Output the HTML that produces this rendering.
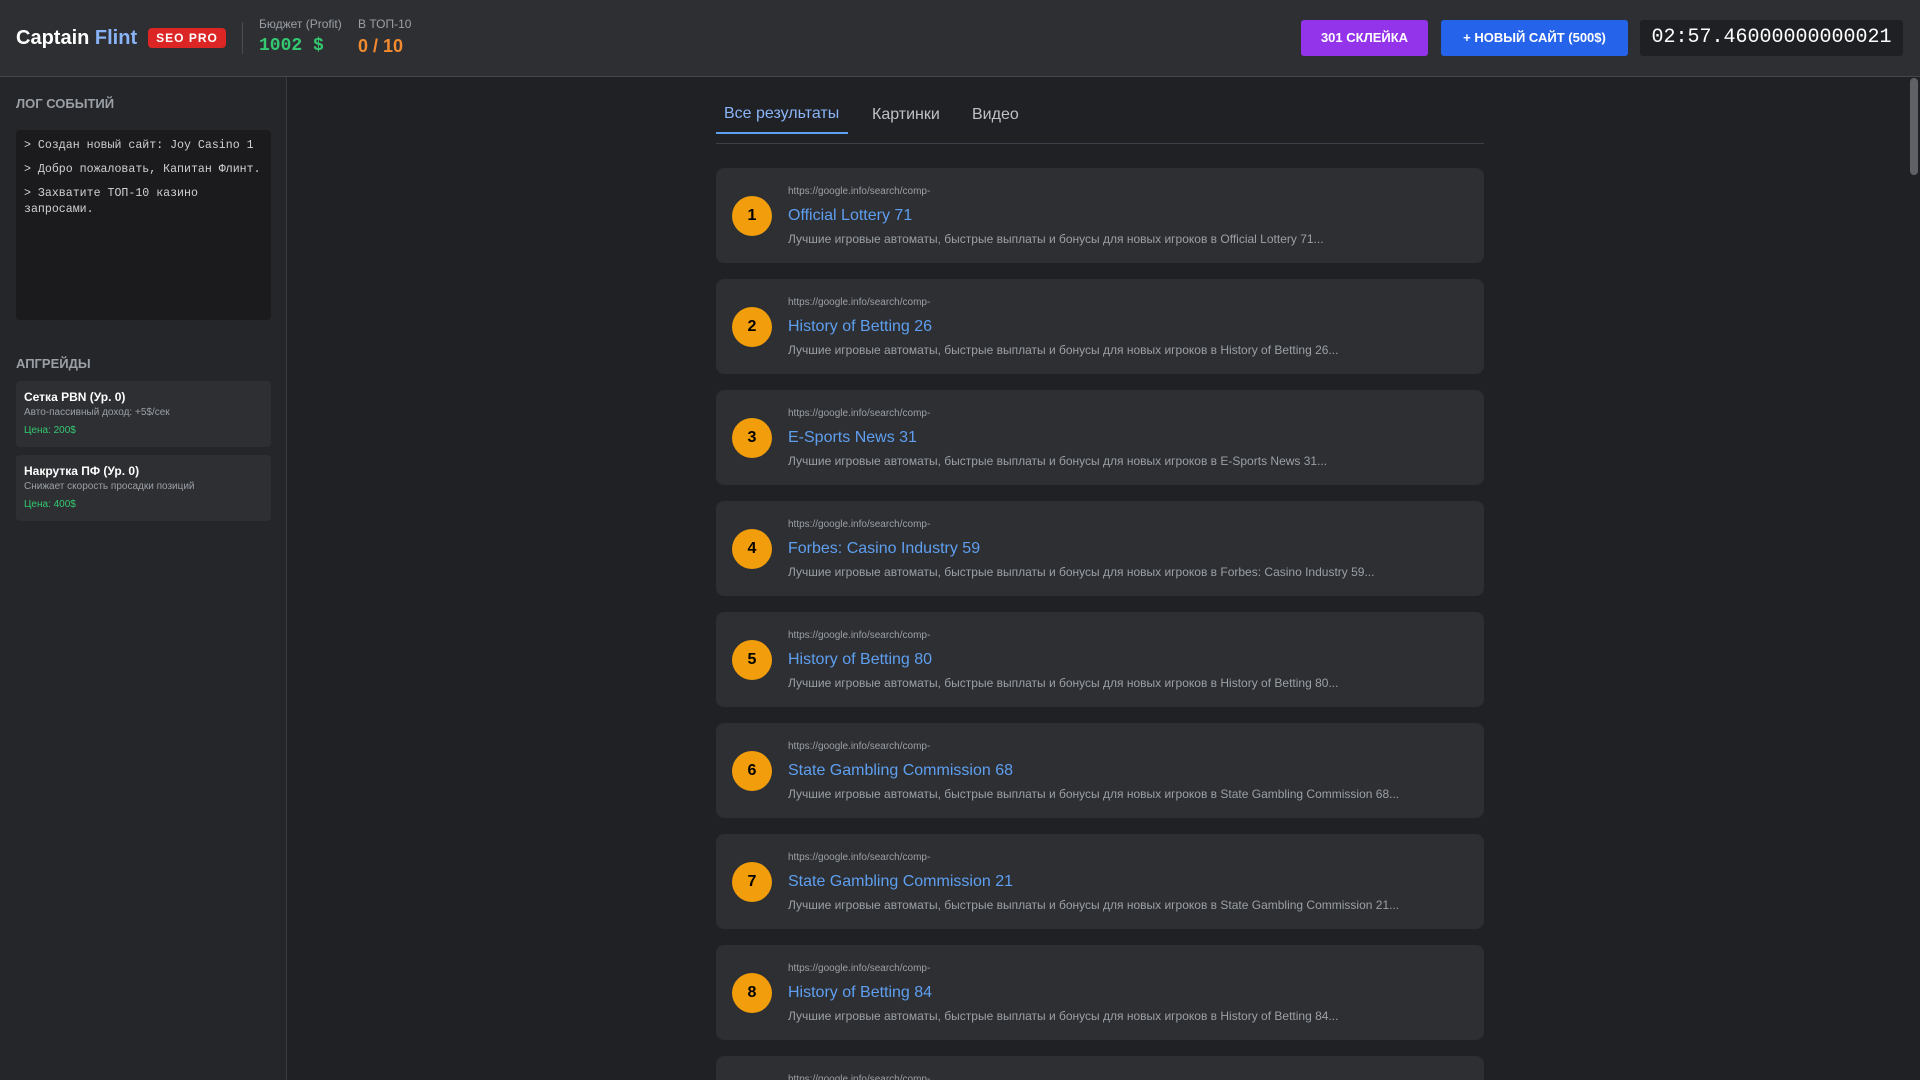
<!DOCTYPE html>
<html><head><meta charset="utf-8"><style>
*{box-sizing:border-box;margin:0;padding:0}
html,body{width:1920px;height:1080px;overflow:hidden}
body{background:#202124;font-family:"Liberation Sans",sans-serif;color:#e8eaed}
#wrap{position:relative;width:1920px;height:1080px;overflow:hidden}
.hdr{position:absolute;left:0;top:0;width:1920px;height:77px;background:#2e2f33;border-bottom:1px solid #44464b}
.abs{position:absolute;white-space:nowrap}
.side{position:absolute;left:0;top:77px;width:287px;height:1003px;background:#25262a;border-right:1px solid #3a3b40}
.log{position:absolute;left:16px;top:130px;width:255px;height:190px;background:#1b1b1d;border-radius:4px;font-family:"Liberation Mono",monospace;font-size:11.6px;color:#cfd1d4;padding:8px 7px 8px 8px;line-height:16px}
.log p{margin-bottom:8px}
.up{position:absolute;left:16px;width:255px;height:66px;background:#2e2f33;border-radius:4px;padding:9px 8px}
.up b{font-size:12px;color:#fff;display:block}
.up i{font-style:normal;font-size:10px;color:#9aa0a6;display:block;margin-top:3px}
.up s{text-decoration:none;font-size:10px;color:#34c870;display:block;margin-top:7px}
.card{position:absolute;left:716px;width:768px;height:95px;background:#2e2f33;border-radius:8px}
.num{position:absolute;left:16px;top:28px;width:40px;height:40px;border-radius:50%;background:#f29d0b;color:#000;font-weight:bold;font-size:16px;text-align:center;line-height:40px}
.u{position:absolute;left:72px;top:18px;font-size:10px;color:#9aa0a6}
.t{position:absolute;left:72px;top:39px;font-size:16px;color:#5e9ff0}
.d{position:absolute;left:72px;top:64px;font-size:12px;color:#9aa0a6;white-space:nowrap}
</style></head><body><div id="wrap">
<div class="hdr">
<div class="abs" style="left:16px;top:27px;font-size:20px;font-weight:bold;color:#fff">Captain <span style="color:#8ab4f8">Flint</span></div>
<div class="abs" style="left:148px;top:28px;width:78px;height:20px;background:#dc2626;border-radius:4px;color:#fff;font-weight:bold;font-size:12px;text-align:center;line-height:20px;letter-spacing:1px">SEO PRO</div>
<div class="abs" style="left:242px;top:22px;width:1px;height:32px;background:#4a4c52"></div>
<div class="abs" style="left:259px;top:17px;font-size:12px;color:#9aa0a6">Бюджет (Profit)</div>
<div class="abs" style="left:259px;top:36px;font-size:18px;font-weight:bold;color:#34c870;font-family:'Liberation Mono',monospace">1002 $</div>
<div class="abs" style="left:358px;top:17px;font-size:12px;color:#9aa0a6">В ТОП-10</div>
<div class="abs" style="left:358px;top:36px;font-size:18px;font-weight:bold;color:#f28b30">0 / 10</div>
<div class="abs" style="left:1301px;top:20px;width:127px;height:36px;background:#9333ea;border-radius:3px;color:#fff;font-weight:bold;font-size:13px;text-align:center;line-height:36px">301 СКЛЕЙКА</div>
<div class="abs" style="left:1441px;top:20px;width:187px;height:36px;background:#2563eb;border-radius:3px;color:#fff;font-weight:bold;font-size:13px;text-align:center;line-height:36px">+ НОВЫЙ САЙТ (500$)</div>
<div class="abs" style="left:1640px;top:20px;width:263px;height:36px;background:#1f2023;border-radius:3px;color:#fff;font-size:20px;font-family:'Liberation Mono',monospace;text-align:center;line-height:36px">02:57.46000000000021</div>
</div>
<div class="side">
<div class="abs" style="left:16px;top:19px;font-size:13px;font-weight:bold;color:#9aa0a6">ЛОГ СОБЫТИЙ</div>
<div class="log" style="top:53px"><p>&gt; Создан новый сайт: Joy Casino 1</p><p>&gt; Добро пожаловать, Капитан Флинт.</p><p>&gt; Захватите ТОП-10 казино<br>запросами.</p></div>
<div class="abs" style="left:16px;top:279px;font-size:13px;font-weight:bold;color:#9aa0a6">АПГРЕЙДЫ</div>
<div class="up" style="top:304px"><b>Сетка PBN (Ур. 0)</b><i>Авто-пассивный доход: +5$/сек</i><s>Цена: 200$</s></div>
<div class="up" style="top:378px"><b>Накрутка ПФ (Ур. 0)</b><i>Снижает скорость просадки позиций</i><s>Цена: 400$</s></div>
</div>
<div class="abs" style="left:1910px;top:78px;width:8px;height:97px;background:#5f6166;border-radius:4px"></div>
<div class="abs" style="left:724px;top:105px;font-size:16px;color:#8ab4f8">Все результаты</div>
<div class="abs" style="left:872px;top:106px;font-size:16px;color:#bdc1c6">Картинки</div>
<div class="abs" style="left:972px;top:106px;font-size:16px;color:#bdc1c6">Видео</div>
<div class="abs" style="left:716px;top:132px;width:132px;height:2px;background:#5e9ff0"></div>
<div class="abs" style="left:716px;top:143px;width:768px;height:1px;background:#3c4048"></div>
<div class="card" style="top:168px"><div class="num">1</div><div class="u">https://google.info/search/comp-</div><div class="t">Official Lottery 71</div><div class="d">Лучшие игровые автоматы, быстрые выплаты и бонусы для новых игроков в Official Lottery 71...</div></div>
<div class="card" style="top:279px"><div class="num">2</div><div class="u">https://google.info/search/comp-</div><div class="t">History of Betting 26</div><div class="d">Лучшие игровые автоматы, быстрые выплаты и бонусы для новых игроков в History of Betting 26...</div></div>
<div class="card" style="top:390px"><div class="num">3</div><div class="u">https://google.info/search/comp-</div><div class="t">E-Sports News 31</div><div class="d">Лучшие игровые автоматы, быстрые выплаты и бонусы для новых игроков в E-Sports News 31...</div></div>
<div class="card" style="top:501px"><div class="num">4</div><div class="u">https://google.info/search/comp-</div><div class="t">Forbes: Casino Industry 59</div><div class="d">Лучшие игровые автоматы, быстрые выплаты и бонусы для новых игроков в Forbes: Casino Industry 59...</div></div>
<div class="card" style="top:612px"><div class="num">5</div><div class="u">https://google.info/search/comp-</div><div class="t">History of Betting 80</div><div class="d">Лучшие игровые автоматы, быстрые выплаты и бонусы для новых игроков в History of Betting 80...</div></div>
<div class="card" style="top:723px"><div class="num">6</div><div class="u">https://google.info/search/comp-</div><div class="t">State Gambling Commission 68</div><div class="d">Лучшие игровые автоматы, быстрые выплаты и бонусы для новых игроков в State Gambling Commission 68...</div></div>
<div class="card" style="top:834px"><div class="num">7</div><div class="u">https://google.info/search/comp-</div><div class="t">State Gambling Commission 21</div><div class="d">Лучшие игровые автоматы, быстрые выплаты и бонусы для новых игроков в State Gambling Commission 21...</div></div>
<div class="card" style="top:945px"><div class="num">8</div><div class="u">https://google.info/search/comp-</div><div class="t">History of Betting 84</div><div class="d">Лучшие игровые автоматы, быстрые выплаты и бонусы для новых игроков в History of Betting 84...</div></div>
<div class="card" style="top:1056px;height:24px;border-radius:8px 8px 0 0"><div class="u">https://google.info/search/comp-</div></div>
</div></body></html>
